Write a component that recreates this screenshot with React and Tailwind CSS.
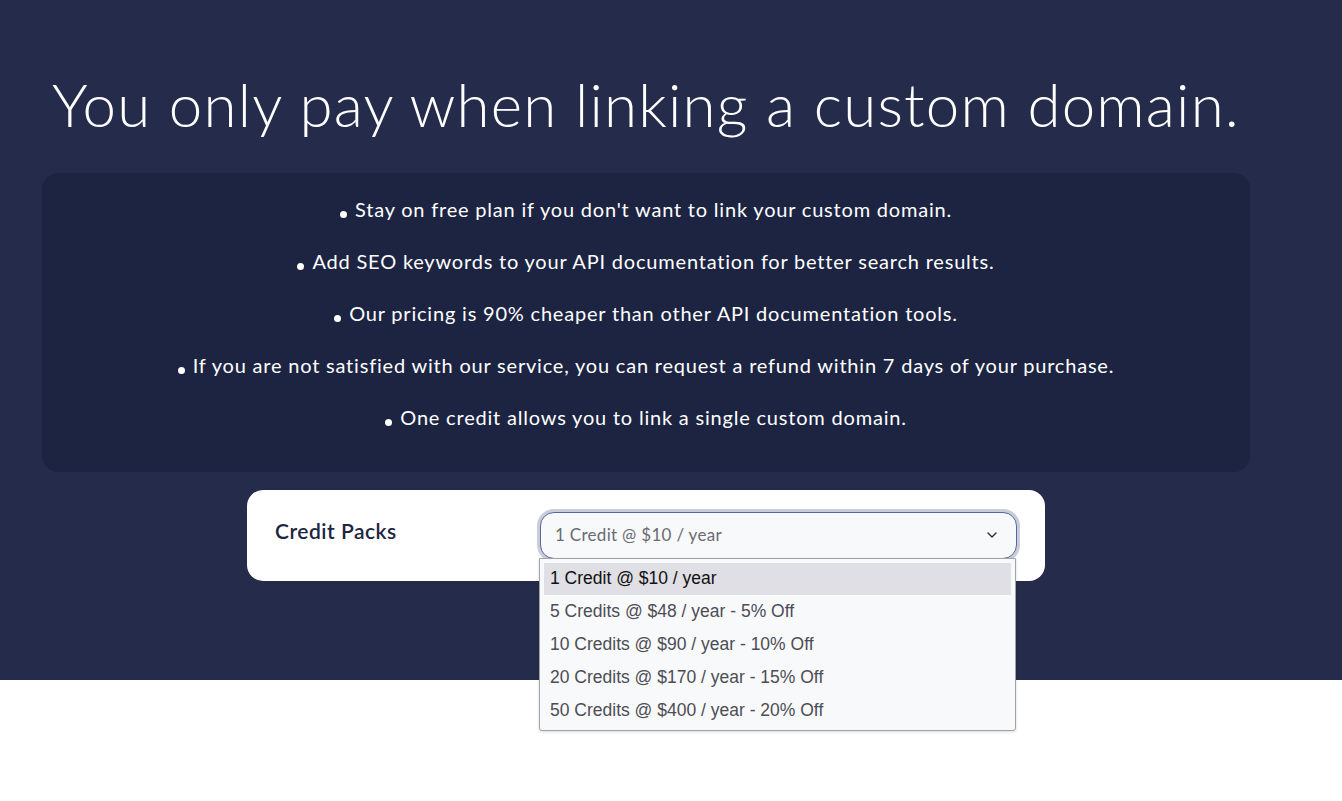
import { ChevronDown } from "lucide-react";

const points = [
    "Stay on free plan if you don't want to link your custom domain.",
    "Add SEO keywords to your API documentation for better search results.",
    "Our pricing is 90% cheaper than other API documentation tools.",
    "If you are not satisfied with our service, you can request a refund within 7 days of your purchase.",
    "One credit allows you to link a single custom domain.",
];

const packs = [
    "1 Credit @ $10 / year",
    "5 Credits @ $48 / year - 5% Off",
    "10 Credits @ $90 / year - 10% Off",
    "20 Credits @ $170 / year - 15% Off",
    "50 Credits @ $400 / year - 20% Off",
];

function CreditSelect() {
    return (
        <div className="relative w-[477px]">
            <div className="flex items-center justify-between h-[47px] pl-[14px] pr-[16px] rounded-[14px] bg-[#f8f9fb] border border-[#5566a6] ring-[3px] ring-[#c9cdd8] text-[17px] tracking-[0.3px] text-[#6a6b73]">
                <span>1 Credit @ $10 / year</span>
                <ChevronDown className="w-[16px] h-[16px] text-[#2c2c2c]" strokeWidth={2} />
            </div>

            {/* open list */}
            <div className="absolute left-[-1px] top-[46px] w-[477px] bg-[#f8f9fb] border border-[#a3a3a3] rounded-b-[3px] shadow-[0_1px_3px_rgba(0,0,0,0.15)] px-[4px] pt-[4px] pb-[3px] z-10"
                style={{ fontFamily: '"Liberation Sans", Arial, sans-serif' }}
            >
                {packs.map((p, i) => (
                    <div
                        key={p}
                        className={`flex items-center px-[6px] text-[17.5px] ${i === 0 ? "bg-[#e0dfe5] text-[#111111] h-[32px]" : "h-[33px] text-[#4d4d55]"}`}
                    >
                        {p}
                    </div>
                ))}
            </div>
        </div>
    );
}

export default function App() {
    return (
        <div className="min-h-[801px] bg-white" style={{ fontFamily: 'Lato, "Open Sans", sans-serif' }}>
            <section className="bg-[#252c4b] h-[680px] pt-[74px]">
                <div className="ml-[42px] w-[1208px]">
                    <h1 className="text-center text-[60px] leading-[60px] font-light text-white tracking-[1.2px]">
                        You only pay when linking a custom domain.
                    </h1>

                    <div className="mt-[39px] bg-[#1c2442] rounded-[16px] pt-[22px] pb-[17px]">
                        {points.map((p) => (
                            <p key={p} className="text-center text-white text-[20px] leading-[28px] tracking-[0.8px] mb-6">
                                <span className="inline-block w-[7px] h-[7px] rounded-full bg-white mr-[8px] align-[-1px]"></span>
                                {p}
                            </p>
                        ))}
                    </div>

                    <div className="mx-auto mt-[18px] w-[798px] h-[91px] bg-white rounded-[16px] flex items-center pl-[28px] pr-[28px]">
                        <span className="text-[21px] font-semibold tracking-[0.5px] text-[#1c2541] w-[265px] -mt-[10px]">Credit Packs</span>
                        <div className="-mt-[1px]">
                            <CreditSelect />
                        </div>
                    </div>
                </div>
            </section>
        </div>
    );
}
